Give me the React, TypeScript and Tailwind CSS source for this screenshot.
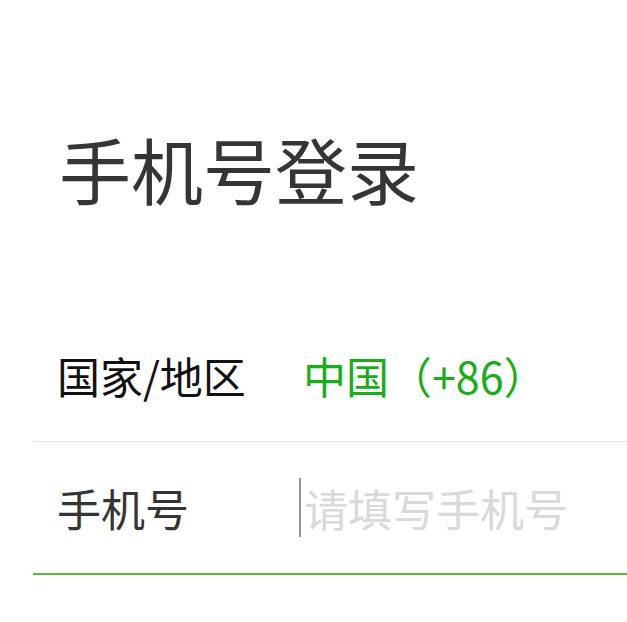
export default function App() {
  return (
    <div
      className="h-[622px] w-[627px] overflow-hidden bg-white pl-[33px]"
      style={{ fontFamily: '"Noto Sans CJK SC", "Noto Sans", sans-serif' }}
    >
      <h1 className="pl-[26px] pt-[125px] text-[72px] leading-[86px] font-normal text-[#353535]">
        手机号登录
      </h1>

      <div className="mt-[98px] flex h-[133px] items-center border-b border-[#e5e5e5] pl-[24px]">
        <span className="w-[246px] text-[43px] text-[#111]">国家/地区</span>
        <span className="text-[43px] text-[#1aad19]">中国（+86）</span>
      </div>

      <div className="flex h-[133px] items-center border-b-2 border-[#56c23b] pl-[24px]">
        <span className="w-[242px] text-[44px] text-[#353535]">手机号</span>
        <div className="flex items-center">
          <span className="h-[59px] w-[2px] bg-[#999]" />
          <input
            className="ml-[3px] w-[300px] bg-transparent text-[44px] text-[#353535] outline-none placeholder:text-[#d9d9d9]"
            placeholder="请填写手机号"
          />
        </div>
      </div>
    </div>
  );
}
